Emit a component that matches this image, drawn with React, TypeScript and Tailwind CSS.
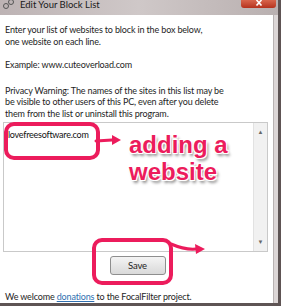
import React from "react";

const font = { fontFamily: 'Lato, "Noto Sans", sans-serif' };

function Arrow({ d, head }: { d: string; head: string }) {
  return (
    <g>
      <path d={d} stroke="#ec1c5c" strokeWidth="3" fill="none" strokeLinecap="round" />
      <polygon points={head} fill="#ec1c5c" />
    </g>
  );
}

export default function App() {
  return (
    <div className="relative w-[284px] h-[308px] bg-white overflow-hidden" style={font}>
      <div className="w-[281px] h-[306px] flex flex-col border-r-[3px] border-b-[3px] border-[#5e5454]">
        {/* title bar */}
        <div className="h-[15px] shrink-0 flex items-start bg-gradient-to-r from-[#bdb3b4] via-[#cfc8c8] to-[#b9b0b0] relative">
          <svg width="14" height="10" viewBox="0 0 14 10" className="ml-[2px] mt-[-1px]">
            <circle cx="4" cy="7" r="2.5" stroke="#555" strokeWidth="1" fill="none" />
            <circle cx="9" cy="3" r="2.5" stroke="#555" strokeWidth="1" fill="none" />
          </svg>
          <span className="ml-[4px] mt-0 text-[9.5px] leading-[10px] whitespace-nowrap text-[#1a1a1a]">Edit Your Block List</span>
          <div className="absolute right-[2px] top-0 w-[35px] h-[8px] rounded-b-[3px] bg-gradient-to-b from-[#d8654c] to-[#b5311c] flex items-start justify-center">
            <svg width="8" height="6" viewBox="0 0 8 6">
              <path d="M1.5 0 L6.5 5.5 M6.5 0 L1.5 5.5" stroke="#fff" strokeWidth="1.6" />
            </svg>
          </div>
        </div>

        <div className="flex-1 flex flex-row min-w-0">
          <div className="flex-1 min-w-0 bg-white flex flex-col px-[5px] pt-[9px] text-[9px] leading-[11.5px] tracking-[-0.15px] whitespace-nowrap text-[#1e1e1e]">
            <p>Enter your list of websites to block in the box below,</p>
            <p>one website on each line.</p>
            <p className="mt-[12px]">Example: www.cuteoverload.com</p>
            <p className="mt-[14px]">Privacy Warning: The names of the sites in this list may be</p>
            <p>be visible to other users of this PC, even after you delete</p>
            <p>them from the list or uninstall this program.</p>

            <div className="mt-[3px] ml-[-2px] w-[265px] h-[130px] shrink-0 border border-[#c9c9c9] flex flex-row">
              <div className="flex-1 pl-[4px] pt-[6px] text-[9px] tracking-[-0.25px] text-[#111]">lovefreesoftware.com</div>
              <div className="w-[14px] bg-[#f1f1f1] border-l border-[#e2e2e2] flex flex-col justify-between items-center py-[6px]">
                <span className="text-[6px] leading-[6px] text-[#666]">▲</span>
                <span className="text-[6px] leading-[6px] text-[#666]">▼</span>
              </div>
            </div>

            <div className="flex justify-center mt-[4px] pl-[2px]">
              <div className="w-[56px] h-[19px] rounded-[3px] border border-[#8e8e8e] bg-gradient-to-b from-[#f4f4f4] to-[#d9d9d9] flex items-center justify-center text-[9.5px] text-[#222]">
                Save
              </div>
            </div>

            <p className="mt-[16px]">
              We welcome <span className="text-[#2f6fb0] underline">donations</span> to the FocalFilter project.
            </p>
          </div>
          <div className="w-[5px] shrink-0 bg-[#dcd6d6] border-l border-[#b8b2b2]" />
        </div>
      </div>

      {/* annotations */}
      <div className="absolute left-[4px] top-[122px] w-[96px] h-[38px] border-[4px] border-[#ec1c5c] rounded-[10px]" />
      <div className="absolute left-[92px] top-[238px] w-[81px] h-[47px] border-[4px] border-[#ec1c5c] rounded-[10px]" />
      <svg className="absolute left-0 top-0" width="284" height="308">
        <Arrow d="M96 141 L112 140" head="112,135 121,140 112,145" />
        <Arrow d="M171 244 Q185 250 196 249" head="195,244 205,249 196,254" />
      </svg>
      <div
        className="absolute left-[129px] top-[131px] text-[24px] leading-[27px] font-bold text-[#ec1c5c] whitespace-nowrap"
        style={{ fontFamily: '"Liberation Sans", Arial, sans-serif', textShadow: "1px 1px 0 #fff, -1px -1px 0 #fff, 1px -1px 0 #fff, -1px 1px 0 #fff, 2px 3px 3px rgba(0,0,0,0.45)" }}
      >
        <div>adding a</div>
        <div>website</div>
      </div>
    </div>
  );
}
